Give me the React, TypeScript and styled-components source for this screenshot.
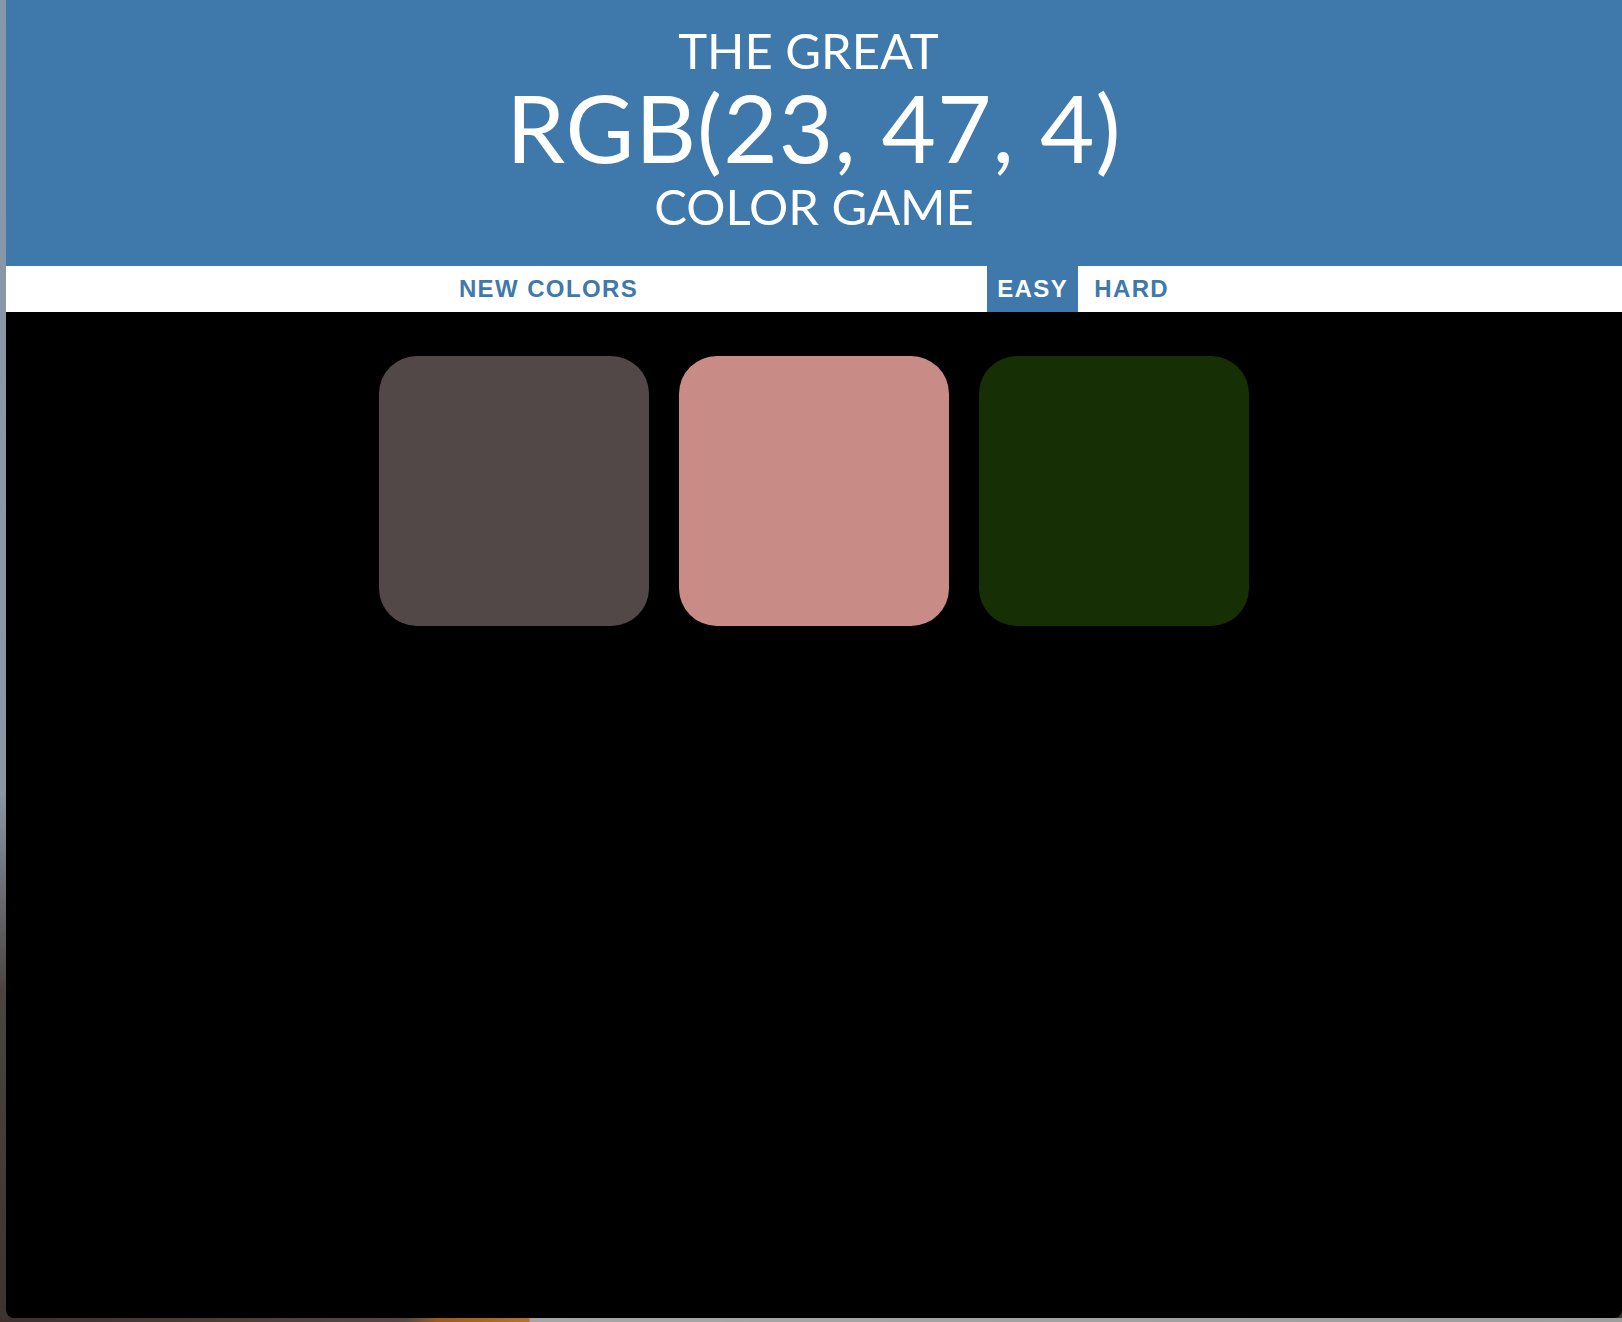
import React, { useState } from "react";
import styled, { createGlobalStyle } from "styled-components";

const BLUE = "#3f78ab";

const GlobalStyle = createGlobalStyle`
  html, body {
    margin: 0;
    padding: 0;
    height: 100%;
    background: #8797aa;
  }
  #root {
    height: 100%;
  }
`;

const colors = ["rgb(82, 72, 71)", "rgb(201, 139, 133)", "rgb(23, 47, 4)"];

export default function App() {
  const [mode, setMode] = useState<"easy" | "hard">("easy");

  return (
    <>
      <GlobalStyle />
      <Desktop>
        <Window>
          <Header>
            <SmallLine $lineHeight={55}>The Great{"\u00a0"}</SmallLine>
            <ColorDisplay>RGB(23, 47, 4)</ColorDisplay>
            <SmallLine $lineHeight={62}>Color Game</SmallLine>
          </Header>
          <Stripe>
            <NavButton>New Colors</NavButton>
            <Message />
            <NavButton $selected={mode === "easy"} onClick={() => setMode("easy")}>
              Easy
            </NavButton>
            <NavButton $selected={mode === "hard"} onClick={() => setMode("hard")}>
              Hard
            </NavButton>
          </Stripe>
          <Board>
            {colors.map(c => (
              <Square key={c} $color={c} />
            ))}
          </Board>
        </Window>
      </Desktop>
    </>
  );
}

const Desktop = styled.div`
  height: 100%;
  display: flex;
  padding: 0 0 4px 6px;
  box-sizing: border-box;
  background:
    linear-gradient(90deg, #3b322e 0%, #564840 25%, #9c5a1e 27%, #b3732f 32.6%, #a6a6a6 32.7%, #9e9e9e 100%)
      bottom / 100% 4px no-repeat,
    linear-gradient(180deg, #8797aa 0%, #8a96a4 60%, #4a4440 75%, #3b3431 100%);
`;

const Window = styled.div`
  flex: 1;
  display: flex;
  flex-direction: column;
  background: #000;
  border-radius: 0 0 8px 8px;
  overflow: hidden;
`;

const Header = styled.header`
  height: 266px;
  box-sizing: border-box;
  padding-top: 23px;
  background: ${BLUE};
  color: #fff;
  text-align: center;
  text-transform: uppercase;
  font-family: Lato, "Open Sans", sans-serif;
  font-weight: 400;
`;

const SmallLine = styled.div<{ $lineHeight: number }>`
  font-size: 49px;
  line-height: ${p => p.$lineHeight}px;
`;

const ColorDisplay = styled.div`
  font-size: 94px;
  line-height: 97px;
  letter-spacing: 1px;
`;

const Stripe = styled.nav`
  height: 46px;
  background: #fff;
  display: flex;
  justify-content: center;
  align-items: stretch;
`;

const NavButton = styled.button<{ $selected?: boolean }>`
  border: none;
  outline: none;
  margin: 0 3px;
  padding: 0 10px;
  background: ${p => (p.$selected ? BLUE : "transparent")};
  color: ${p => (p.$selected ? "#fff" : BLUE)};
  font-family: "Liberation Sans", Arial, sans-serif;
  font-weight: 700;
  font-size: 24px;
  letter-spacing: 1.4px;
  text-transform: uppercase;
  cursor: pointer;
`;

const Message = styled.span`
  width: 333px;
`;

const Board = styled.div`
  width: 900px;
  margin: 29px auto 0;
  display: flex;
  flex-wrap: wrap;
`;

const Square = styled.div<{ $color: string }>`
  width: 30%;
  aspect-ratio: 1;
  margin: 1.66%;
  border-radius: 14%;
  background: ${p => p.$color};
`;
